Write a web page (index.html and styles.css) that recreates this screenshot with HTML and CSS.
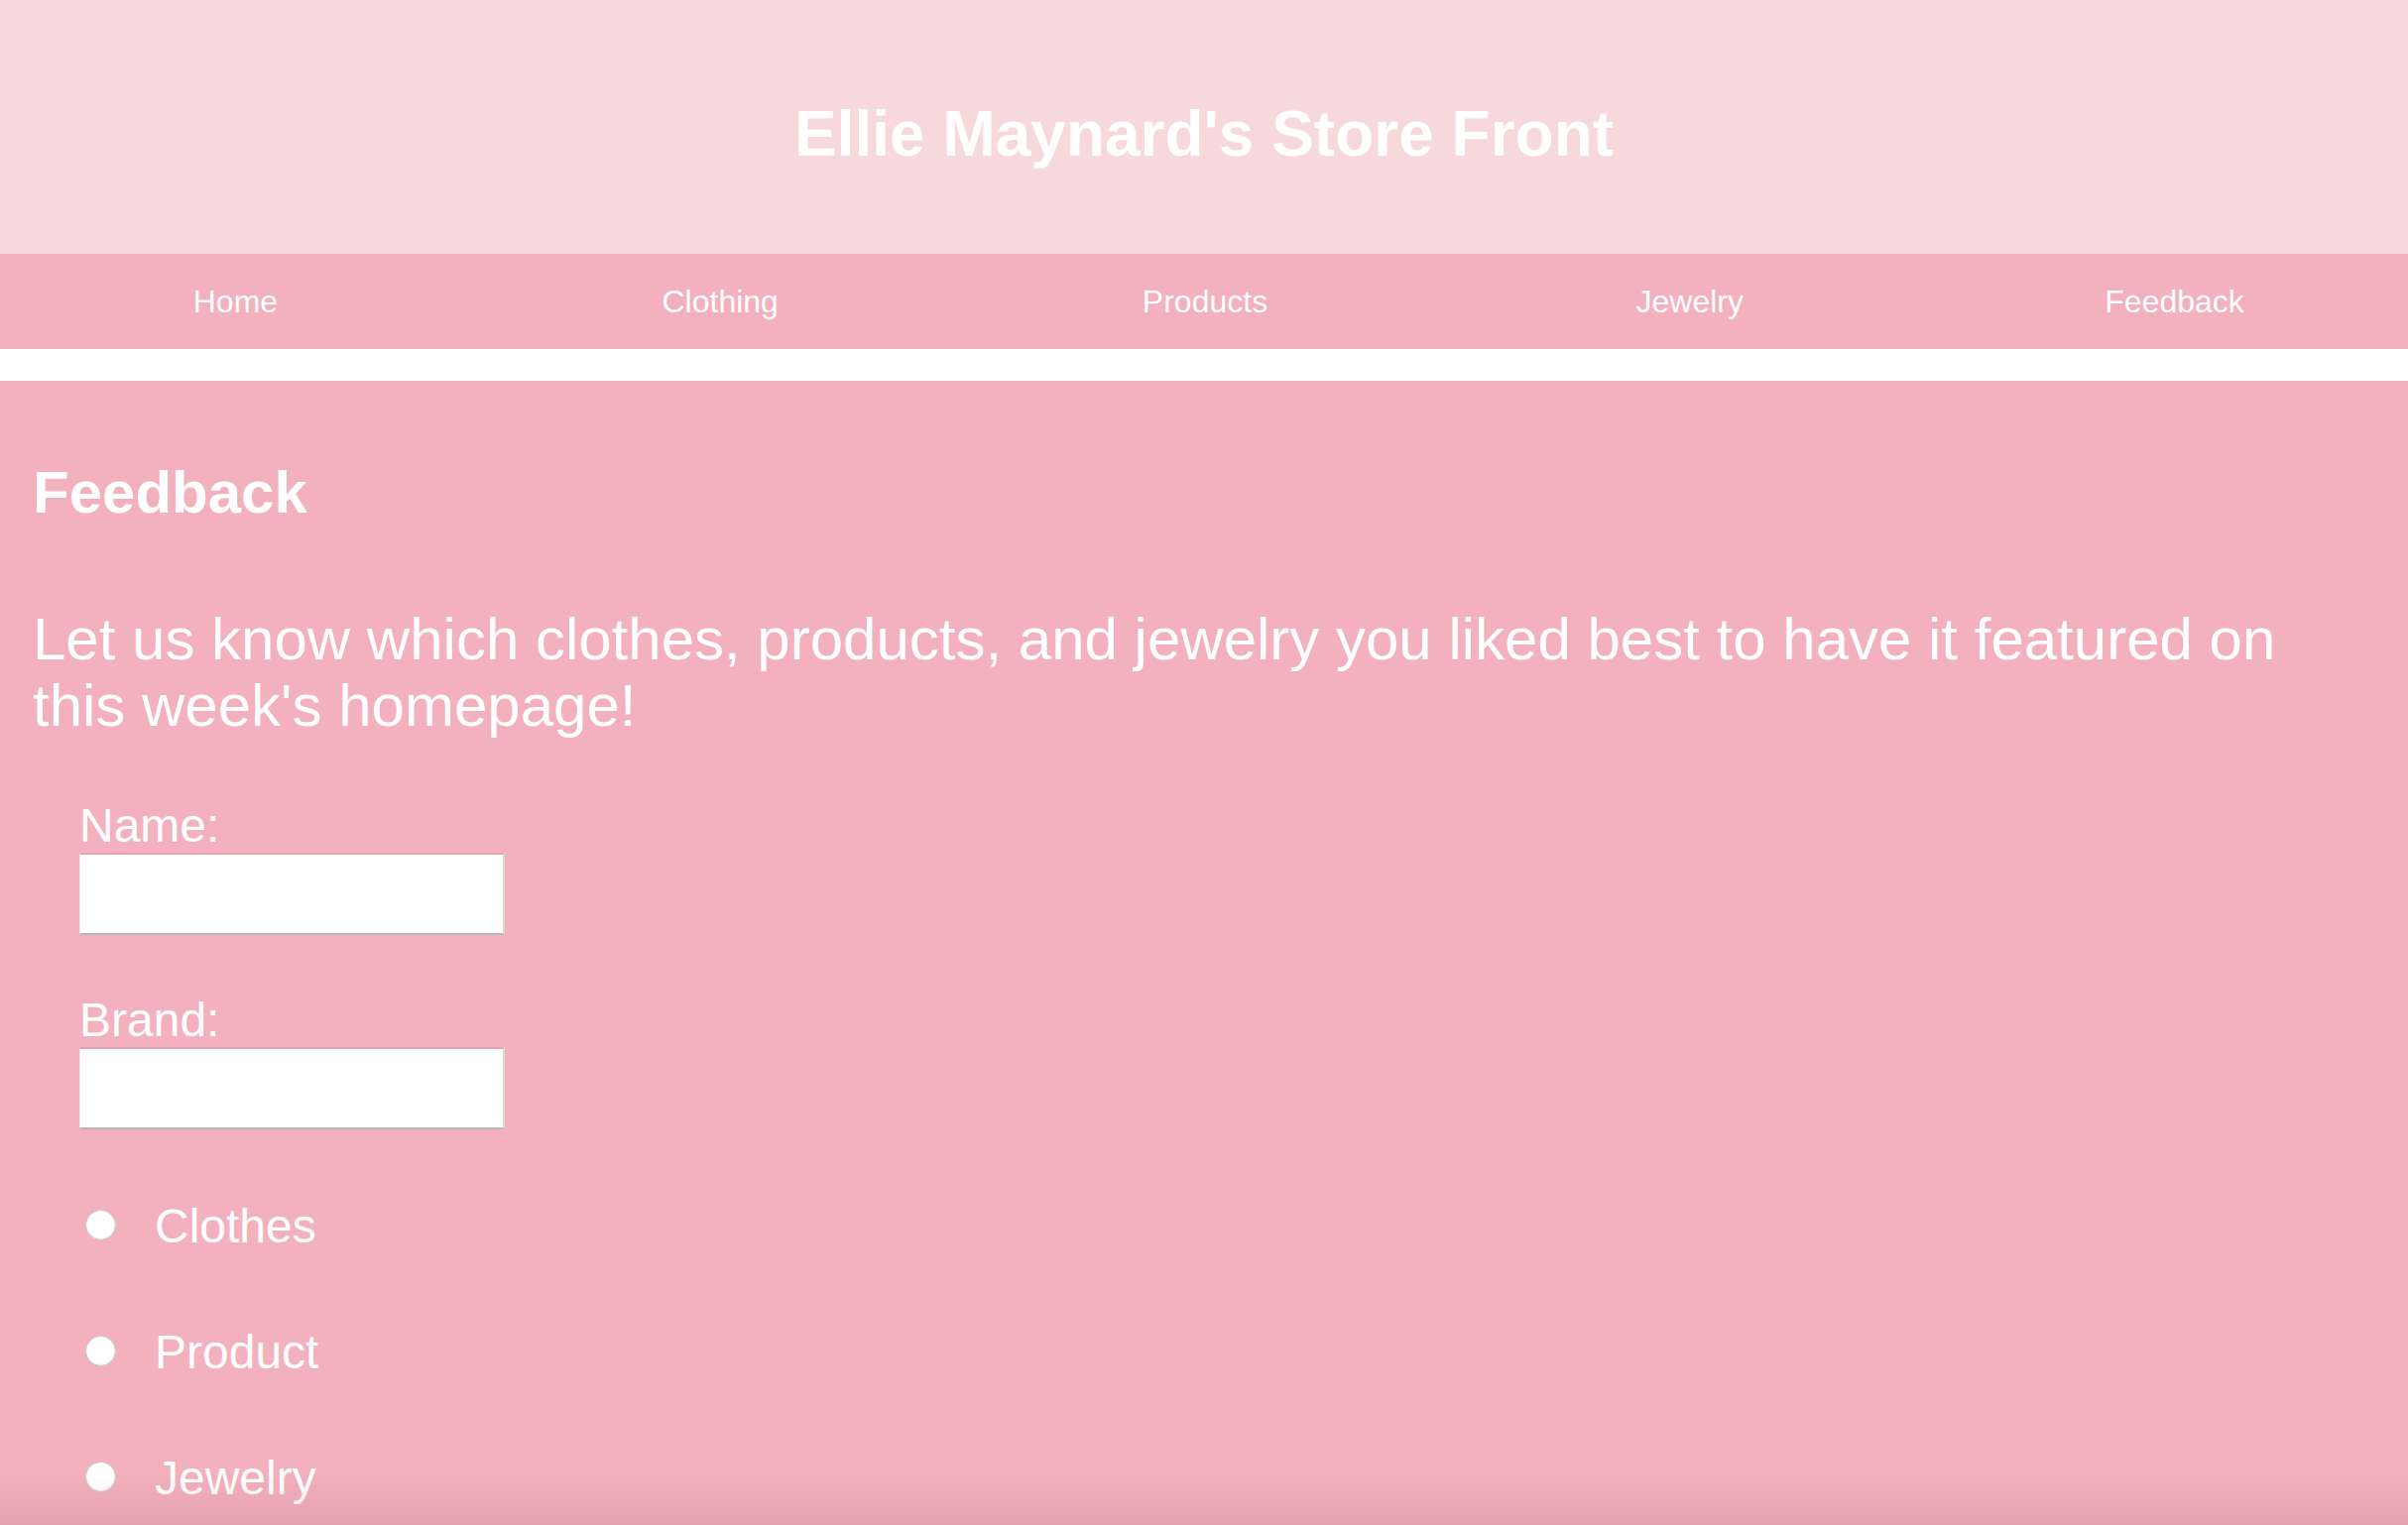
FILE: index.html
```html
<!DOCTYPE html>
<html lang="en">
<head>
<meta charset="utf-8">
<title>Ellie Maynard's Store Front</title>
<link rel="stylesheet" href="styles.css">
</head>
<body>
<header class="site-header">
  <h1 class="site-title">Ellie Maynard's Store Front</h1>
</header>
<nav class="site-nav">
  <ul class="nav-list">
    <li class="nav-item"><a href="#" class="nav-link">Home</a></li>
    <li class="nav-item"><a href="#" class="nav-link">Clothing</a></li>
    <li class="nav-item"><a href="#" class="nav-link">Products</a></li>
    <li class="nav-item"><a href="#" class="nav-link">Jewelry</a></li>
    <li class="nav-item"><a href="#" class="nav-link">Feedback</a></li>
  </ul>
</nav>
<main class="content">
  <h2 class="section-title">Feedback</h2>
  <p class="intro">Let us know which clothes, products, and jewelry you liked best to have it featured on this week's homepage!</p>
  <form class="feedback-form">
    <div class="field">
      <label class="field-label" for="name">Name:</label>
      <input class="text-input" type="text" id="name">
    </div>
    <div class="field">
      <label class="field-label" for="brand">Brand:</label>
      <input class="text-input" type="text" id="brand">
    </div>
    <div class="choices">
      <label class="choice"><input class="radio" type="radio" name="kind"><span>Clothes</span></label>
      <label class="choice"><input class="radio" type="radio" name="kind"><span>Product</span></label>
      <label class="choice"><input class="radio" type="radio" name="kind"><span>Jewelry</span></label>
    </div>
  </form>
</main>
<div class="bottom-shade"></div>
</body>
</html>
```
FILE: styles.css
```css
html, body {
  margin: 0;
  padding: 0;
}
body {
  font-family: "Liberation Sans", Arial, sans-serif;
  color: #ffffff;
  background: #ffffff;
  overflow-x: hidden;
}
.site-header {
  background: #f7d8dc;
  height: 256px;
  box-sizing: border-box;
  padding-top: 98px;
}
.site-title {
  margin: 0;
  text-align: center;
  font-size: 64px;
  font-weight: bold;
  line-height: 74px;
}
.site-nav {
  background: #f2b1bd;
  height: 96px;
  overflow: hidden;
}
.nav-list {
  list-style: none;
  margin: 0 -9px 0 -7px;
  padding: 0;
  display: flex;
  height: 100%;
  align-items: center;
}
.nav-item {
  flex: 1 1 0;
  text-align: center;
  font-size: 32px;
  line-height: 37px;
}
.nav-link {
  color: #ffffff;
  text-decoration: none;
}
.content {
  margin-top: 32px;
  background: #f2b1bd;
  padding: 78px 34px 200px 33px;
}
.section-title {
  margin: 0;
  font-size: 60px;
  font-weight: bold;
  line-height: 69px;
}
.intro {
  margin: 80px 0 0 0;
  font-size: 60px;
  line-height: 67px;
}
.feedback-form {
  margin-top: 60px;
  padding-left: 47px;
}
.field {
  display: flex;
  flex-direction: column;
  align-items: flex-start;
  margin-bottom: 58px;
}
.field-label {
  font-size: 48px;
  line-height: 55px;
}
.text-input {
  width: 429px;
  height: 83px;
  box-sizing: border-box;
  margin: 0;
  background: #ffffff;
  border-style: solid;
  border-width: 2px 2px 2px 1px;
  border-color: #e6a3af #dadada #b6b6b6 #f4e4e6;
  font-size: 32px;
  outline: none;
}
.choices {
  margin-top: 70px;
  display: flex;
  flex-direction: column;
  gap: 72px;
}
.choice {
  display: flex;
  align-items: center;
  font-size: 48px;
  line-height: 55px;
}
.radio {
  -webkit-appearance: none;
  appearance: none;
  width: 31px;
  height: 31px;
  margin: 0 39px 0 6px;
  border-radius: 50%;
  background: #ffffff;
  border: 1px solid #c9c9c9;
  box-shadow: inset 0 -1px 2px rgba(0, 0, 0, 0.08);
  box-sizing: border-box;
  position: relative;
  top: -1px;
}
.bottom-shade {
  position: fixed;
  left: 0;
  right: 0;
  bottom: 0;
  height: 52px;
  background: linear-gradient(to bottom, rgba(0, 0, 0, 0), rgba(90, 20, 30, 0.09));
  pointer-events: none;
}
```
